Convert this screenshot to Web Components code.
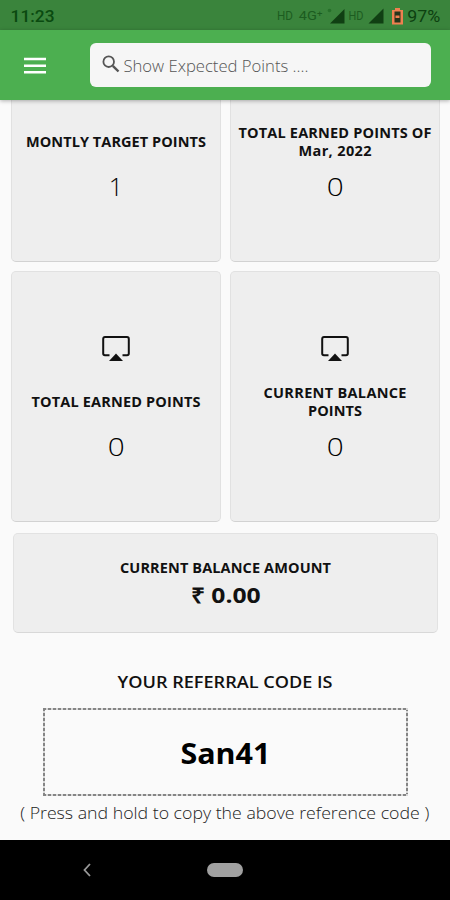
<!DOCTYPE html>
<html lang="en">
<head>
<meta charset="utf-8">
<title>Points</title>
<style>
html, body {
  margin: 0;
  height: 100%;
  overflow: hidden;
  background: #fafafa;
}
</style>
</head>
<body>
<points-app></points-app>
</body>
<script>
class BaseElement extends HTMLElement {
  constructor() { super()
    this.attachShadow({mode: 'open'}).innerHTML = this.constructor.tpl
  }
}

// one line of text, set to the width given in px:
// tracked out, or with wider letters if it has the stretch attribute
class FitLine extends BaseElement {
  static tpl = `
<style>
:host { display: block; text-align: center; white-space: nowrap; }
span { display: inline-block; }
</style>
<span><slot></slot></span>
`
  connectedCallback(){
    let span = this.shadowRoot.querySelector('span')
    let w = Number(this.getAttribute('width'))
    let n = this.textContent.length
    let natural = span.getBoundingClientRect().width
    if(!w || !natural){ return }
    if(this.hasAttribute('stretch')){
      this.style.width = `${w}px`
      span.style.margin = `0 ${(w - natural) / 2}px`
      span.style.transform = `scaleX(${w / natural})`
      return
    }
    if(n < 2){ return }
    let gap = (w - natural) / (n - 1)
    span.style.letterSpacing = `${gap}px`
    span.style.marginRight = `${-gap}px`
  }
}

class StatusBar extends BaseElement {
  static tpl = `
<style>
:host {
  display: flex;
  align-items: center;
  height: 30px;
  padding: 2px 10px 0 11px;
  box-sizing: border-box;
  background: #3a843c;
  color: #0d4010;
  font: 17px/20px Roboto, sans-serif;
}
.time { font-weight: 500; color: #0a4a10; }
.right { display: flex; align-items: center; margin-left: auto; }
.net { font-size: 13px; color: #1c5c20; }
svg { display: block; }
</style>
<fit-line class="time" stretch width="44">11:23</fit-line>
<div class="right">
  <fit-line class="net" stretch width="16">HD</fit-line>
  <fit-line class="net" stretch width="24" style="margin-left:6px">4G⁺</fit-line>
  <svg width="18" height="18" viewBox="0 0 18 18" style="margin-left:4px"><circle cx="2.5" cy="3.5" r="1.8" fill="#26702a"/><path d="M3 16.5L17.5 2V16.5Z" fill="#103f13"/></svg>
  <fit-line class="net" stretch width="15" style="margin-left:3px">HD</fit-line>
  <svg width="16" height="18" viewBox="0 0 16 18" style="margin-left:5px"><path d="M.5 16.5L15.5 1.5V16.5Z" fill="#103f13"/></svg>
  <svg width="11" height="18" viewBox="0 0 11 18" style="margin:0 4px 0 8px"><path d="M3 1h5v2h3v14.500H0V3h3Z" fill="#ef8050"/><rect x="2.500" y="4.500" width="6" height="11" fill="#26351b"/><rect x="3.500" y="8.500" width="4" height="2.500" fill="#ef8050"/></svg>
  <fit-line stretch width="33">97%</fit-line>
</div>
`
}

class AppHeader extends BaseElement {
  static tpl = `
<style>
:host {
  display: flex;
  align-items: center;
  height: 70px;
  padding: 0 19px 0 24px;
  box-sizing: border-box;
  background: #4caf50;
  box-shadow: 0 1px 4px rgba(0,0,0,.3);
  z-index: 1;
}
.menu { display: block; width: 22px; height: 17px; margin-right: 44px; }
.search {
  flex: 1;
  display: flex;
  align-items: center;
  height: 44px;
  padding-left: 12px;
  box-sizing: border-box;
  border-radius: 6px;
  background: #f6f6f6;
  color: #555;
  font: 300 16px/20px 'Open Sans', sans-serif;
}
.search svg { margin: 0 3px 2px 0; }
.label { padding-top: 2px; }
</style>
<svg class="menu" viewBox="0 0 22 17"><path d="M0 2h22M0 8.700h22M0 15.300h22" stroke="#fff" stroke-width="2.600"/></svg>
<div class="search">
  <svg width="18" height="18" viewBox="0 0 18 18" fill="none" stroke="#555"><circle cx="6.700" cy="6.700" r="5.300" stroke-width="1.800"/><path d="M10.800 10.800L16.500 16.500" stroke-width="2.400"/></svg>
  <div class="label"><slot></slot></div>
</div>
`
}

class PointsCard extends BaseElement {
  static tpl = `
<style>
:host {
  display: flex;
  flex-direction: column;
  align-items: center;
  box-sizing: border-box;
  border: 1px solid #e1e1e1;
  border-bottom-color: #d2d2d2;
  border-radius: 5px;
  background: #eee;
  color: #111;
}
.icon { display: none; width: 28px; height: 25px; margin-top: 64px; }
:host([icon]) .icon { display: block; }
.title {
  display: flex;
  flex-direction: column;
  justify-content: center;
  height: 36px;
  margin-top: 24px;
  font: 700 14.500px/17.600px 'Open Sans', sans-serif;
}
.value {
  margin-top: 9px;
  color: #000;
  font: 300 25px/34px 'Open Sans', sans-serif;
}
:host([icon]) .title { margin-top: 23px; }
:host([cut]) { border-top: 0; border-radius: 0 0 5px 5px; }
</style>
<svg class="icon" viewBox="0 0 28 25"><path d="M7.500 19.300H3Q1.200 19.300 1.200 17.500V2.900Q1.200 1.100 3 1.100H25Q26.800 1.100 26.800 2.900V17.500Q26.800 19.300 25 19.300H20.500" fill="none" stroke="#111" stroke-width="2"/><path d="M7 25L14 17.500L21 25Z" fill="#111"/></svg>
<div class="title"><slot></slot></div>
<div class="value"><slot name="value"></slot></div>
`
}

class BalanceCard extends BaseElement {
  static tpl = `
<style>
:host {
  display: flex;
  flex-direction: column;
  align-items: center;
  height: 100px;
  padding-top: 24px;
  box-sizing: border-box;
  border: 1px solid #e2e2e2;
  border-bottom-color: #d8d8d8;
  border-radius: 5px;
  background: #eee;
  color: #111;
  font: 700 14.500px/20px 'Open Sans', sans-serif;
}
.amount { margin-top: 3px; font-size: 21px; line-height: 28px; }
</style>
<slot></slot>
<div class="amount"><slot name="amount"></slot></div>
`
}

class ReferralCode extends BaseElement {
  static tpl = `
<style>
:host {
  display: flex;
  flex-direction: column;
  align-items: center;
  color: #111;
  font-family: 'Open Sans', sans-serif;
}
.head { font-size: 16px; line-height: 22px; font-weight: 600; }
.code {
  --h: repeating-linear-gradient(90deg, #858585 0 3px, #d8d8d8 3px 5px);
  --v: repeating-linear-gradient(#858585 0 3px, #d8d8d8 3px 5px);
  display: flex;
  align-items: center;
  justify-content: center;
  width: 365px;
  height: 88px;
  padding-top: 2px;
  margin: 15px 0 0 1px;
  box-sizing: border-box;
  background: var(--h) top / 100% 2px, var(--h) bottom / 100% 2px, var(--v) left / 2px 100%, var(--v) right / 2px 100%;
  background-repeat: no-repeat;
  color: #000;
  font-size: 28px;
  font-weight: 700;
}
.hint { margin-top: 6px; font-size: 16px; line-height: 22px; font-weight: 300; color: #222; }
</style>
<div class="head"><slot name="head"></slot></div>
<div class="code"><slot></slot></div>
<div class="hint"><slot name="hint"></slot></div>
`
}

class NavBar extends BaseElement {
  static tpl = `
<style>
:host {
  display: grid;
  grid-template-columns: 1fr auto 1fr;
  align-items: center;
  height: 60px;
  background: #000;
}
.back { width: 8px; height: 14px; margin-left: 83px; }
.home { width: 36px; height: 14px; border-radius: 7px; background: #a0a0a0; }
</style>
<svg class="back" viewBox="0 0 8 14"><path d="M7 1L1.500 7L7 13" fill="none" stroke="#999" stroke-width="1.800"/></svg>
<div class="home"></div>
`
}

class PointsApp extends BaseElement {
  static tpl = `
<style>
:host {
  display: flex;
  flex-direction: column;
  width: 450px;
  height: 900px;
  background: #fafafa;
}
main { flex: 1; min-height: 0; overflow: hidden; }
.cards {
  display: grid;
  grid-template-columns: 210px 210px;
  grid-template-rows: 162px 251px;
  gap: 9px;
  padding: 0 10px 0 11px;
}
balance-card { margin: 11px 12px 0 13px; }
referral-code { margin-top: 38px; }
</style>
<status-bar></status-bar>
<app-header><fit-line stretch width="185">Show Expected Points ....</fit-line></app-header>
<main>
  <div class="cards">
    <points-card cut><fit-line width="180">MONTLY TARGET POINTS</fit-line><fit-line slot="value">1</fit-line></points-card>
    <points-card cut><fit-line width="193">TOTAL EARNED POINTS OF</fit-line><fit-line width="73">Mar, 2022</fit-line><fit-line slot="value" stretch width="17">0</fit-line></points-card>
    <points-card icon><fit-line width="169">TOTAL EARNED POINTS</fit-line><fit-line slot="value" stretch width="17">0</fit-line></points-card>
    <points-card icon><fit-line width="143">CURRENT BALANCE</fit-line><fit-line width="54">POINTS</fit-line><fit-line slot="value" stretch width="17">0</fit-line></points-card>
  </div>
  <balance-card><fit-line width="211">CURRENT BALANCE AMOUNT</fit-line><fit-line slot="amount" stretch width="70">₹ 0.00</fit-line></balance-card>
  <referral-code>
    <fit-line slot="head" stretch width="215">YOUR REFERRAL CODE IS</fit-line>
    <fit-line stretch width="90">San41</fit-line>
    <fit-line slot="hint" stretch width="409">( Press and hold to copy the above reference code )</fit-line>
  </referral-code>
</main>
<nav-bar></nav-bar>
`
}

customElements.define('points-card',PointsCard)
customElements.define('balance-card',BalanceCard)
customElements.define('referral-code',ReferralCode)
customElements.define('status-bar',StatusBar)
customElements.define('app-header',AppHeader)
customElements.define('nav-bar',NavBar)
customElements.define('points-app',PointsApp)
// last, so that every line is measured in its final font
customElements.define('fit-line',FitLine)
</script>
</html>
